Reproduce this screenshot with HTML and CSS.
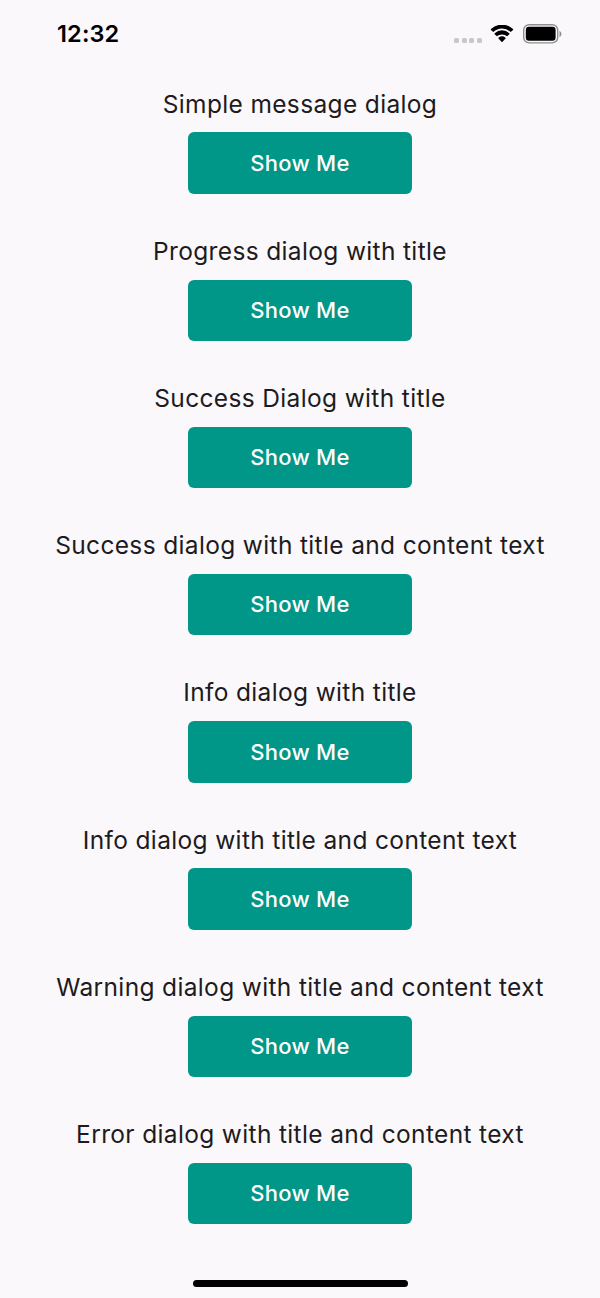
FILE: index.html
```html
<!DOCTYPE html>
<html lang="en">
<head>
<meta charset="utf-8">
<title>Dialogs</title>
<link rel="stylesheet" href="styles.css">
</head>
<body>
<div class="screen">
  <header class="status">
    <span class="time">12:32</span>
    <div class="indicators">
      <span class="signal"><i></i><i></i><i></i><i></i></span>
      <svg class="wifi" width="24" height="18" viewBox="0 0 24 18"><path d="M12 3.500C8.700 3.500 5.700 4.800 3.300 7.100L1 4.900Q.6 4.500 1 4.100A15.800 15.800 0 0 1 23 4.100Q23.400 4.500 23 4.900L20.700 7.100A12.300 12.300 0 0 0 12 3.500Z"/><path d="M12 9.400C10 9.400 8.300 10.100 6.900 11.300L4.700 9.200Q4.300 8.700 4.700 8.300A10.500 10.500 0 0 1 19.300 8.300Q19.700 8.700 19.300 9.200L17.100 11.300A8 8 0 0 0 12 9.400Z"/><path d="M8.500 13.500Q8 13 8.500 12.700A5.700 5.700 0 0 1 15.500 12.700Q16 13 15.500 13.500L12.500 16.800Q12 17.300 11.500 16.800Z"/></svg>
      <svg class="battery" width="39" height="20" viewBox="0 0 39 20"><rect class="shell" x=".7" y=".7" width="34" height="18.200" rx="5.500"/><rect x="2.800" y="2.800" width="29.800" height="14" rx="3.200"/><path class="cap" d="M36.500 6.800Q38.500 8 38.500 10T36.500 13.200Z"/></svg>
    </div>
  </header>
  <main class="list">
    <section class="item"><p class="label">Simple message dialog</p><button class="button">Show Me</button></section>
    <section class="item"><p class="label">Progress dialog with title</p><button class="button">Show Me</button></section>
    <section class="item"><p class="label">Success Dialog with title</p><button class="button">Show Me</button></section>
    <section class="item"><p class="label">Success dialog with title and content text</p><button class="button">Show Me</button></section>
    <section class="item"><p class="label">Info dialog with title</p><button class="button">Show Me</button></section>
    <section class="item"><p class="label">Info dialog with title and content text</p><button class="button">Show Me</button></section>
    <section class="item"><p class="label">Warning dialog with title and content text</p><button class="button">Show Me</button></section>
    <section class="item"><p class="label">Error dialog with title and content text</p><button class="button">Show Me</button></section>
  </main>
  <div class="home"></div>
</div>
</body>
</html>
```
FILE: styles.css
```css
* { box-sizing: border-box; }
body { margin: 0; background: #faf8fb; font-family: Inter, Roboto, sans-serif; }
.screen { width: 600px; height: 1298px; display: flex; flex-direction: column; align-items: center; overflow: hidden; }
.status { width: 100%; height: 68px; padding: 0 38px 1px 57px; display: flex; justify-content: space-between; align-items: center; flex: none; }
.time { font-size: 23.500px; font-weight: 600; letter-spacing: .15px; color: #000; }
.indicators { display: flex; align-items: center; padding-top: 1px; }
.signal { display: flex; gap: 2.700px; margin: 12px 8px 0 0; }
.signal i { width: 5px; height: 5px; border-radius: 1.5px; background: #c9c7ca; }
.wifi { margin-right: 9px; }
.shell { fill: none; stroke: #8e8d90; stroke-width: 1.4; }
.cap { fill: #8e8d90; }
.list { padding-top: 20.600px; flex: 1; }
.item { height: 147.200px; display: flex; flex-direction: column; align-items: center; }
.label { margin: 0 0 12.300px; height: 31.500px; line-height: 31.800px; font-size: 24.500px; letter-spacing: .35px; color: #1d1b20; white-space: nowrap; }
.button { width: 224px; height: 61.500px; padding: 0 0 .6px; border: 0; border-radius: 6px; background: #009688; color: #fff; font: 500 22px Inter, sans-serif; letter-spacing: .25px; }
.home { width: 215px; height: 7px; border-radius: 4px; background: #000; margin-bottom: 11.500px; flex: none; }
```
